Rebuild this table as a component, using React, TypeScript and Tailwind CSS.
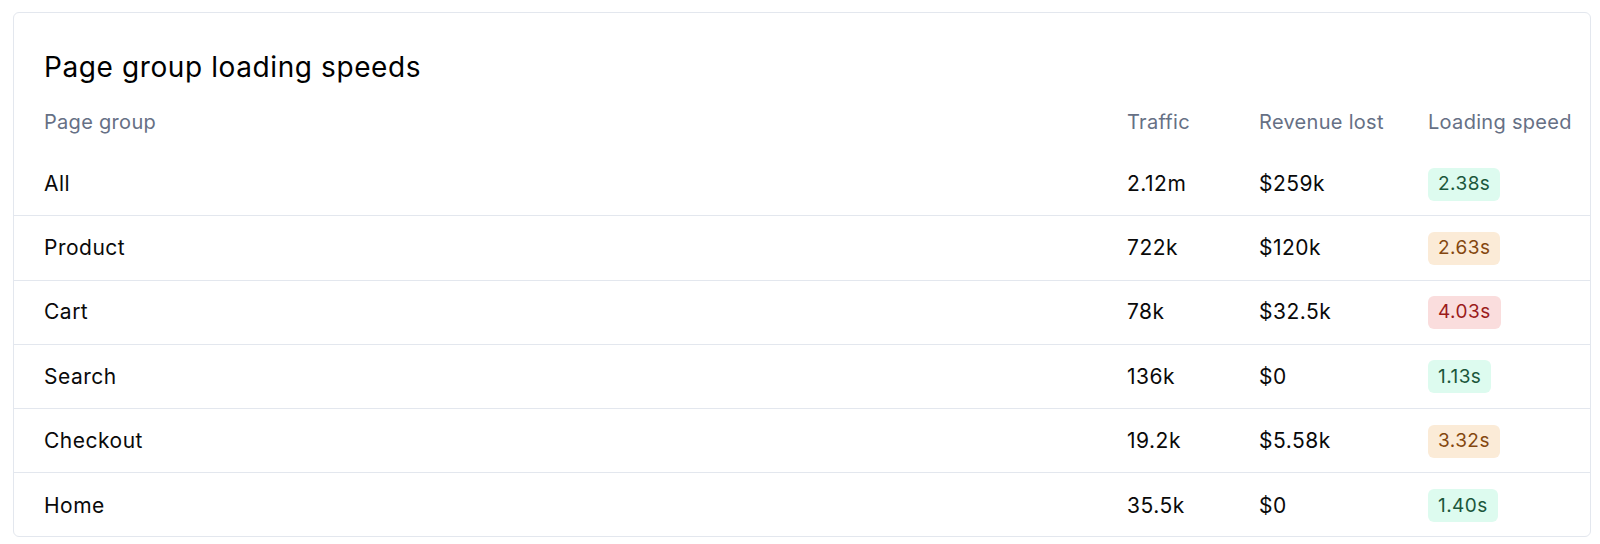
import React from "react";

type Tone = "green" | "orange" | "red";

const rows: { name: string; traffic: string; revenue: string; speed: string; tone: Tone }[] = [
  { name: "All", traffic: "2.12m", revenue: "$259k", speed: "2.38s", tone: "green" },
  { name: "Product", traffic: "722k", revenue: "$120k", speed: "2.63s", tone: "orange" },
  { name: "Cart", traffic: "78k", revenue: "$32.5k", speed: "4.03s", tone: "red" },
  { name: "Search", traffic: "136k", revenue: "$0", speed: "1.13s", tone: "green" },
  { name: "Checkout", traffic: "19.2k", revenue: "$5.58k", speed: "3.32s", tone: "orange" },
  { name: "Home", traffic: "35.5k", revenue: "$0", speed: "1.40s", tone: "green" },
];

function Badge({ tone, children }: { tone: Tone; children: React.ReactNode }) {
  const cls =
    tone === "green"
      ? "bg-[#ddfbef] text-[#1b573b]"
      : tone === "orange"
      ? "bg-[#fbebd7] text-[#84470f]"
      : "bg-[#fadddd] text-[#9b1b1b]";
  return (
    <span
      className={`inline-flex h-[33px] items-center rounded-[6px] px-[10px] text-[19px] tracking-[0.45px] ${cls}`}
    >
      {children}
    </span>
  );
}

export default function App() {
  return (
    <div className="min-h-[544px] bg-white pl-[13px] pt-[12px] font-['Inter',sans-serif] text-[#0a0a0a]">
      <div className="h-[525px] w-[1578px] overflow-hidden rounded-[6px] border border-[#e3e7ee] bg-white">
        <div className="pl-[30px] pt-[38px] text-[28px] leading-[32px] tracking-[0.6px] text-black">
          Page group loading speeds
        </div>
        <div className="mt-[8px] grid h-[61px] grid-cols-[1fr_132px_169px_162px] items-center text-[20px] tracking-[0.3px] text-[#667085]">
          <div className="pl-[30px]">Page group</div>
          <div>Traffic</div>
          <div>Revenue lost</div>
          <div>Loading speed</div>
        </div>
        {rows.map((r, i) => (
          <div
            key={r.name}
            className={`grid h-[64.25px] grid-cols-[1fr_132px_169px_162px] items-center text-[21px] tracking-[0.5px] ${
              i < rows.length - 1 ? "border-b border-[#e3e7ee]" : ""
            }`}
          >
            <div className="pl-[30px]">{r.name}</div>
            <div>{r.traffic}</div>
            <div>{r.revenue}</div>
            <div>
              <Badge tone={r.tone}>{r.speed}</Badge>
            </div>
          </div>
        ))}
      </div>
    </div>
  );
}
